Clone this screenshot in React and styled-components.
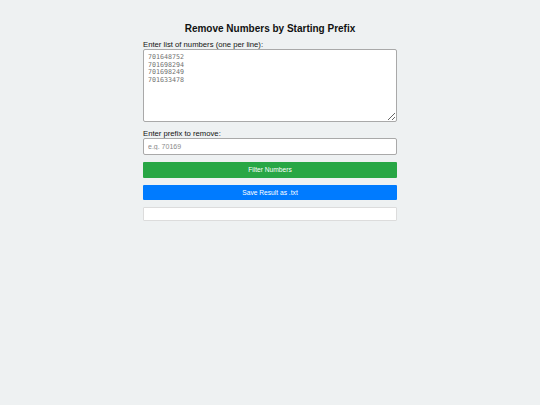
import React, { useState } from "react";
import styled, { createGlobalStyle } from "styled-components";

const GlobalStyle = createGlobalStyle`
  html, body {
    margin: 0;
    padding: 0;
    background: #eef1f2;
    font-family: "Liberation Sans", Arial, sans-serif;
  }
`;

const Wrapper = styled.div`
  width: 254px;
  margin: 0 auto;
  padding-top: 22px;
  display: flex;
  flex-direction: column;
`;

const Title = styled.h2`
  margin: 0 0 5px;
  font-size: 10px;
  line-height: 13px;
  font-weight: bold;
  text-align: center;
  color: #111;
`;

const Label = styled.label`
  display: block;
  font-size: 7.7px;
  line-height: 9px;
  color: #111;
  margin-top: ${(props) => (props.marginTop ? props.marginTop : '0px')};
`;

const NumbersArea = styled.textarea`
  box-sizing: border-box;
  width: 100%;
  height: 73px;
  margin: 0;
  padding: 4px;
  border: 1px solid #a9a9a9;
  border-radius: 2px;
  background: #fff;
  font-family: "DejaVu Sans Mono", monospace;
  font-size: 6.67px;
  line-height: 7.6px;
  color: #707070;
  resize: vertical;
`;

const PrefixInput = styled.input`
  box-sizing: border-box;
  width: 100%;
  height: 17px;
  margin: 0;
  padding: 0 4px;
  border: 1px solid #a9a9a9;
  border-radius: 2px;
  background: #fff;
  font-family: "Liberation Sans", Arial, sans-serif;
  font-size: 7px;
  color: #333;
  &::placeholder {
    color: #8a8a8a;
  }
`;

const Button = styled.button`
  box-sizing: border-box;
  width: 100%;
  height: 15.5px;
  margin-top: ${(props) => (props.marginTop ? props.marginTop : '7px')};
  padding: 0;
  border: none;
  border-radius: 1px;
  background: ${(props) => props.bg};
  color: #fff;
  font-family: "Liberation Sans", Arial, sans-serif;
  font-size: 6.67px;
  cursor: pointer;
`;

const Result = styled.div`
  box-sizing: border-box;
  width: 100%;
  height: 14px;
  margin-top: 6.5px;
  border: 1px solid #dcdcdc;
  border-radius: 1px;
  background: #fff;
  font-size: 7px;
  white-space: pre-wrap;
`;

const App = () => {
  const [numbers, setNumbers] = useState("701648752\n701698294\n701698249\n701633478");
  const [prefix, setPrefix] = useState("");
  const [result, setResult] = useState("");

  const filterNumbers = () => {
    const kept = numbers
      .split("\n")
      .map((n) => n.trim())
      .filter((n) => n && !(prefix && n.startsWith(prefix)));
    setResult(kept.join("\n"));
  };

  const saveResult = () => {
    const blob = new Blob([result], { type: "text/plain" });
    const link = document.createElement("a");
    link.href = URL.createObjectURL(blob);
    link.download = "result.txt";
    link.click();
  };

  return (
    <>
      <GlobalStyle />
      <Wrapper>
        <Title>Remove Numbers by Starting Prefix</Title>
        <Label htmlFor="numbers">Enter list of numbers (one per line):</Label>
        <NumbersArea
          id="numbers"
          value={numbers}
          onChange={(e) => setNumbers(e.target.value)}
        />
        <Label htmlFor="prefix" marginTop={'7.2px'}>Enter prefix to remove:</Label>
        <PrefixInput
          id="prefix"
          placeholder="e.g. 70169"
          value={prefix}
          onChange={(e) => setPrefix(e.target.value)}
        />
        <Button bg="#28a745" marginTop={'7px'} onClick={filterNumbers}>Filter Numbers</Button>
        <Button bg="#007bff" onClick={saveResult}>Save Result as .txt</Button>
        <Result>{result}</Result>
      </Wrapper>
    </>
  );
};

export default App;
